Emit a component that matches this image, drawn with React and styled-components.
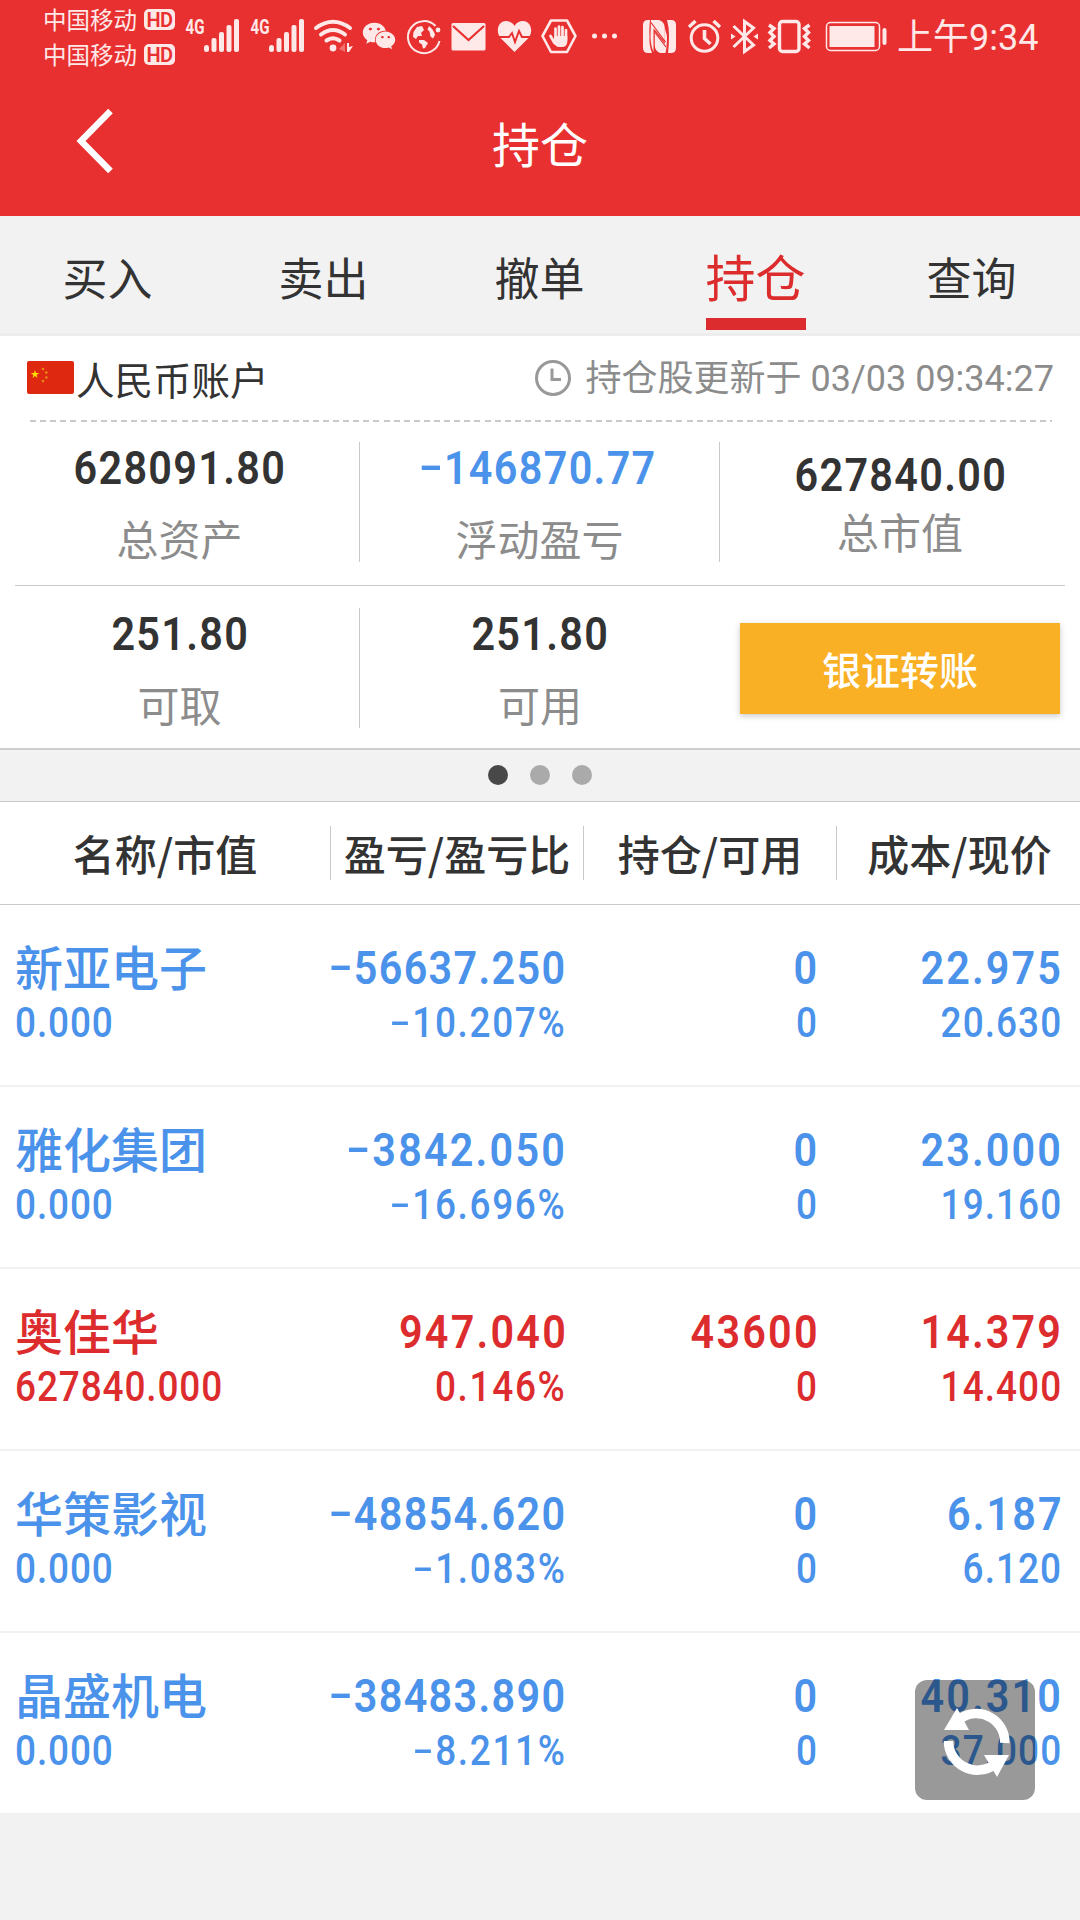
import React from 'react'
import styled, { createGlobalStyle } from 'styled-components'
import { FaWeixin } from 'react-icons/fa6'

const COLORS = {
  HEADER: '#e83030',
  RED: '#dd2c2e',
  BLUE: '#4a92ea',
  TEXT: '#333333',
  MUTED: '#8c8c8c',
  LINE: '#c9c9c9',
  BG_GRAY: '#f2f2f2',
  STATUS: '#ffe8e8',
  ORANGE: '#f9b024'
}

const FONT = 'Roboto, "Noto Sans CJK SC", sans-serif'
const CJK = '"Noto Sans CJK SC", sans-serif'

const GlobalStyle = createGlobalStyle`
  body {
    margin: 0;
    background: ${COLORS.BG_GRAY};
    color: ${COLORS.TEXT};
    font-family: ${FONT};
  }
  * {
    box-sizing: border-box;
  }
`

const Page = styled.div`
  position: relative;
  width: 1080px;
  height: 1920px;
  overflow: hidden;
  background: ${COLORS.BG_GRAY};
`

const Header = styled.header`
  height: 216px;
  background: ${COLORS.HEADER};
`

const StatusBar = styled.div`
  display: flex;
  height: 72px;
  padding-left: 43px;
  color: ${COLORS.STATUS};
`

const Carriers = styled.div`
  display: flex;
  flex-direction: column;
  padding-top: 2px;
  width: 143px;
`

const Carrier = styled.div`
  display: flex;
  align-items: center;
  gap: 7px;
  height: 35px;
  font-family: ${CJK};
  font-size: 23.5px;
  line-height: 35px;
  white-space: nowrap;
`

const HdBadge = styled.span`
  width: 31px;
  height: 21px;
  border-radius: 5px;
  background: ${COLORS.STATUS};
  color: ${COLORS.HEADER};
  font-family: Roboto, sans-serif;
  font-size: 20px;
  font-weight: 600;
  letter-spacing: -0.5px;
  line-height: 22px;
  text-align: center;
`

const Glyph = styled.svg`
  flex: none;
  display: block;
  height: 72px;
  width: ${props => props.$w}px;
  margin-left: ${props => props.$gap || 0}px;
  overflow: visible;
  fill: ${COLORS.STATUS};
`

const WeixinIcon = styled(FaWeixin)`
  flex: none;
  width: 34px;
  height: 32px;
  margin: 20px 0 0 9px;
`

const Time = styled.div`
  margin-left: 10px;
  padding-top: 2px;
  font-size: 36px;
  line-height: 72px;
  white-space: nowrap;
`

const TitleBar = styled.div`
  display: grid;
  grid-template-columns: 160px 1fr 160px;
  align-items: center;
  height: 144px;
`

const BackIcon = styled.svg`
  width: 42px;
  height: 70px;
  margin: 0 0 8px 74px;
`

const Title = styled.h1`
  margin: 0;
  color: #fff;
  font-family: ${CJK};
  font-size: 48px;
  font-weight: 400;
  line-height: 140px;
  height: 144px;
  text-align: center;
`

const Tabs = styled.nav`
  display: grid;
  grid-template-columns: repeat(5, 1fr);
  height: 120px;
  border-bottom: 3px solid #ededed;
`

const Tab = styled.div`
  display: flex;
  flex-direction: column;
  align-items: center;
  font-family: ${CJK};
  font-size: ${props => (props.$active ? 50 : 45)}px;
  padding-right: 1px;
  color: ${props => (props.$active ? COLORS.RED : COLORS.TEXT)};

  &::after {
    content: '';
    display: ${props => (props.$active ? 'block' : 'none')};
    width: 100px;
    height: 12px;
    background: ${COLORS.RED};
  }
`

const TabText = styled.span`
  height: 102px;
  line-height: ${props => (props.$active ? 118 : 122)}px;
`

const Account = styled.section`
  background: #fff;
`

const AccountBar = styled.div`
  display: flex;
  align-items: center;
  height: 84px;
  padding: 0 27px;
`

const Flag = styled.svg`
  width: 47px;
  height: 33px;
  margin: 0 2px 2px 0;
`

const AccountName = styled.div`
  flex: 1;
  font-family: ${CJK};
  font-size: 38.5px;
  line-height: 84px;
`

const ClockIcon = styled.svg`
  width: 38px;
  height: 38px;
  margin-right: 14px;
`

const Updated = styled.div`
  padding-top: 3px;
  margin-right: -1px;
  color: ${COLORS.MUTED};
  font-size: 36px;
  line-height: 81px;
  white-space: nowrap;
`

const DashedLine = styled.div`
  height: 2px;
  margin: 0 28px 0 30px;
  background: repeating-linear-gradient(90deg, ${COLORS.LINE} 0 6px, transparent 6px 10.1px);
`

const Metrics = styled.div`
  display: grid;
  grid-template-columns: repeat(3, 1fr);
  height: ${props => props.$height}px;
  padding: ${props => props.$top}px 0 0;
`

const Metric = styled.div`
  display: flex;
  flex-direction: column;
  align-items: center;
  height: 120px;
  padding-top: ${props => (props.$tight ? 8 : 1)}px;
  border-right: ${props => (props.$last ? 'none' : `1px solid ${COLORS.LINE}`)};
  color: ${props => props.$color || COLORS.TEXT};
`

const MetricLabel = styled.div`
  margin-top: ${props => (props.$tight ? 6 : 20)}px;
  color: ${COLORS.MUTED};
  font-family: ${CJK};
  font-size: 42px;
  line-height: 50px;
`

const Divider = styled.div`
  height: 1px;
  margin: 0 15px;
  background: ${COLORS.LINE};
`

const TransferButton = styled.button`
  width: 320px;
  height: 91px;
  margin: 15px 0 0 20px;
  padding: 0 0 2px;
  border: 0;
  background: ${COLORS.ORANGE};
  box-shadow: 0 2px 6px rgba(0, 0, 0, 0.22);
  color: #fff;
  font-family: ${CJK};
  font-size: 39px;
  font-weight: 500;
`

const Pager = styled.div`
  display: flex;
  justify-content: center;
  align-items: center;
  gap: 22px;
  height: 54px;
  padding: 0 1px 2px 0;
  border-top: 2px solid #cecece;
  border-bottom: 1px solid ${COLORS.LINE};
`

const Dot = styled.span`
  width: 20px;
  height: 20px;
  border-radius: 50%;
  background: ${props => (props.$active ? '#484848' : '#aaaaaa')};
`

const TableHead = styled.div`
  display: grid;
  grid-template-columns: 331px 253px 253px 245px;
  align-items: center;
  height: 103px;
  border-bottom: 1px solid ${COLORS.LINE};
  background: #fff;
`

const HeadCell = styled.div`
  height: 54px;
  border-right: ${props => (props.$last ? 'none' : `1px solid ${COLORS.LINE}`)};
  font-family: ${CJK};
  font-size: 42px;
  font-weight: 500;
  line-height: 54px;
  text-align: center;
  white-space: nowrap;
`

const Row = styled.div`
  display: grid;
  grid-template-columns: 280px 285px 252px 244px;
  height: 182px;
  padding-top: 32px;
  border-bottom: 2px solid #f1f1f1;
  background: #fff;
  color: ${props => (props.$up ? COLORS.RED : COLORS.BLUE)};
`

const Cell = styled.div`
  display: flex;
  flex-direction: column;
  align-items: ${props => (props.$left ? 'flex-start' : 'flex-end')};
  padding-left: ${props => (props.$left ? 15 : 0)}px;
`

const StockName = styled.div`
  height: 60px;
  font-family: ${CJK};
  font-size: 48px;
  font-weight: 500;
  line-height: 56px;
`

// digits are drawn slightly condensed, DIN style
const Digits = styled.div`
  height: 50px;
  margin-top: ${props => props.$offset || 0}px;
  margin-right: -${props => props.$spacing}px;
  font-family: Roboto, sans-serif;
  font-size: ${props => (props.$small ? 42 : 47)}px;
  font-weight: ${props => (props.$small ? 500 : 600)};
  letter-spacing: ${props => props.$spacing}px;
  line-height: 50px;
  white-space: nowrap;
  transform: scaleX(0.88);
  transform-origin: ${props => props.$origin || 'right'};
`

const Minus = styled.span`
  display: inline-block;
  margin-right: 4px;
  transform: translateY(-1px) scale(1.65, 0.9);
`

const RefreshButton = styled.button`
  position: absolute;
  left: 915px;
  top: 1680px;
  width: 120px;
  height: 120px;
  padding: 0;
  border: 0;
  border-radius: 12px;
  background: rgba(0, 0, 0, 0.4);
`

const tabs = ['买入', '卖出', '撤单', '持仓', '查询']

const columns = ['名称/市值', '盈亏/盈亏比', '持仓/可用', '成本/现价']

const positions = [
  { name: '新亚电子', value: '0.000', profit: '-56637.250', ratio: '-10.207%', held: '0', usable: '0', cost: '22.975', price: '20.630' },
  { name: '雅化集团', value: '0.000', profit: '-3842.050', ratio: '-16.696%', held: '0', usable: '0', cost: '23.000', price: '19.160' },
  { name: '奥佳华', value: '627840.000', profit: '947.040', ratio: '0.146%', held: '43600', usable: '0', cost: '14.379', price: '14.400', up: true },
  { name: '华策影视', value: '0.000', profit: '-48854.620', ratio: '-1.083%', held: '0', usable: '0', cost: '6.187', price: '6.120' },
  { name: '晶盛机电', value: '0.000', profit: '-38483.890', ratio: '-8.211%', held: '0', usable: '0', cost: '40.310', price: '37.000' }
]

const Num = ({ children, small, offset, origin, spacing = 1.5 }) => {
  const negative = children[0] === '-'
  return (
    <Digits $small={small} $offset={offset} $origin={origin} $spacing={spacing}>
      {negative && <Minus>-</Minus>}
      {negative ? children.slice(1) : children}
    </Digits>
  )
}

const Signal = ({ gap }) => (
  <Glyph $w={53} $gap={gap} viewBox="186 0 53 72">
    <text x="185.5" y="33.5" fontFamily="Roboto" fontSize="20.5" fontWeight="700" textLength="19" lengthAdjust="spacingAndGlyphs">4G</text>
    <rect x="204" y="45" width="5" height="7" rx="2.5" />
    <rect x="211.5" y="38" width="5" height="14" rx="2" />
    <rect x="219" y="32" width="5" height="20" rx="2" />
    <rect x="226.5" y="25" width="5" height="27" rx="2" />
    <rect x="234" y="19" width="5" height="33" rx="2" />
  </Glyph>
)

const StatusIcons = () => (
  <>
    <Signal />
    <Signal gap={12} />
    <Glyph $w={39} $gap={10} viewBox="314 0 39 72">
      <g fill="none" stroke={COLORS.STATUS} strokeWidth="4" strokeLinecap="round">
        <path d="M316 28 Q333 15.500 350 28" />
        <path d="M321 34.500 Q333 25.500 345 34.500" />
        <path d="M326.500 40.500 Q333 36 339.500 40.500" />
      </g>
      <circle cx="333" cy="48" r="3.400" />
      <path d="M339 49 l6 -6 v9 z" opacity=".35" />
      <path d="M347 43 v9 l2 0 l4 -6 l-4 1 v-4 z" />
    </Glyph>
    <WeixinIcon />
    <Glyph $w={35} $gap={10} viewBox="407 0 35 72">
      <path d="M436.500 26 A16 16 0 1 0 440.500 41" fill="none" stroke={COLORS.STATUS} strokeWidth="2" />
      <circle cx="439" cy="30" r="2.400" />
      <path d="M423 26 l-5 1 l-3.500 5 l-.5 5 l3 2 l2 -3 l4 0 l-1 -3 l3 -3 l-1 -2 z" />
      <path d="M420 40 l5 0 l4 3 l-3 5 l-2 .5 l-1 -4 l-3 -2 z" />
      <path d="M430 26 q5 4 6 9 l-2 3.500 l-2.500 -2 l-1 -5 l-2 -2 z" />
    </Glyph>
    <Glyph $w={34} $gap={10} viewBox="452 0 34 72">
      <rect x="452.500" y="23" width="34" height="27.500" rx="1.500" />
      <path d="M454 26 L469.500 40 L485 26" fill="none" stroke={COLORS.HEADER} strokeWidth="2.200" />
    </Glyph>
    <Glyph $w={35} $gap={12} viewBox="497 0 35 72">
      <path d="M514.500 52 L501 38.500 C495 32 498 21 506 21 C510 21 513 23 514.500 26 C516 23 519 21 523 21 C531 21 534 32 528 38.500 Z" />
      <path d="M497 37 H509 L512 33 L515 42 L519 31 L522 37 H533" fill="none" stroke={COLORS.HEADER} strokeWidth="1.900" />
    </Glyph>
    <Glyph $w={36} $gap={9} viewBox="541 0 36 72">
      <path d="M551 20.500 H567 L575.500 36 L567 52 H551 L542.500 36 Z" fill="none" stroke={COLORS.STATUS} strokeWidth="2.600" strokeLinejoin="round" />
      <g stroke={COLORS.STATUS} strokeWidth="2.700" strokeLinecap="round">
        <path d="M555.500 38 V28.500 M559 38 V26.500 M562.500 38 V27 M566 40 V30 M550.500 36 L554.500 43" />
      </g>
      <path d="M554 36 H567.300 V42 Q567 47 562 47 H558 Q555 46 552 40 L554 41 Z" />
    </Glyph>
    <Glyph $w={25} $gap={15} viewBox="592 0 25 72">
      <circle cx="594.500" cy="36" r="2.500" />
      <circle cx="604.500" cy="36" r="2.500" />
      <circle cx="614.500" cy="36" r="2.500" />
    </Glyph>
    <Glyph $w={33} $gap={26} viewBox="643 0 33 72">
      <path d="M648 20 H650 Q649 30 649.500 36 Q649 46 652 53 H648 Q643 53 643 48 V25 Q643 20 648 20 Z" />
      <path d="M651 20 H659 Q664.800 22 664.800 28 V42 L656 31 L653.500 28.500 V52 Q650.500 45 650.500 36 Z" />
      <path d="M654.800 31.500 L664.800 44 V28 L667 36 Q667 47 665.500 53 H660 Q654.800 51 654.800 45 Z" />
      <path d="M667 20 H671 Q676 20 676 25 V48 Q676 53 671 53 H668 Q669 45 669 36 Q669 27 667 20 Z" />
      <path d="M651 22.500 L665.500 42 M654.200 31.500 L666 47" fill="none" stroke={COLORS.HEADER} strokeWidth="1.200" />
    </Glyph>
    <Glyph $w={33} $gap={12} viewBox="688 0 33 72">
      <g fill="none" stroke={COLORS.STATUS} strokeWidth="3">
        <circle cx="704.500" cy="38" r="13.300" />
        <path d="M704.500 30 V38.500 L710.500 44" strokeWidth="3.600" />
        <path d="M689 27 L695.500 21 M720 27 L713.500 21" strokeWidth="3.500" />
      </g>
    </Glyph>
    <Glyph $w={27} $gap={10} viewBox="731 0 27 72">
      <path d="M733.500 26 L753.500 45 L744.500 51.500 V21.500 L753.500 28 L733.500 47" fill="none" stroke={COLORS.STATUS} strokeWidth="3" />
      <path d="M731 33.500 l4.500 3 l-4.500 3 z M758 33.500 l-4.500 3 l4.500 3 z" />
    </Glyph>
    <Glyph $w={42} $gap={10} viewBox="768 0 42 72">
      <g fill="none" stroke={COLORS.STATUS} strokeWidth="3.400">
        <rect x="779.500" y="21.500" width="19.500" height="30" rx="3" />
        <path d="M769 25 L774 28.500 L770 32.500 L774 36.500 L770 40.500 L774 44 L769 48 M809.500 25 L804.500 28.500 L808.500 32.500 L804.500 36.500 L808.500 40.500 L804.500 44 L809.500 48" />
      </g>
    </Glyph>
    <Glyph $w={62} $gap={15} viewBox="825 0 62 72">
      <rect x="826.500" y="22.500" width="53" height="28" rx="4" fill="none" stroke={COLORS.STATUS} strokeWidth="1.500" />
      <rect x="829.500" y="26" width="45" height="21" />
      <rect x="882.500" y="28" width="4" height="17" rx="2" />
    </Glyph>
  </>
)

const AccountSummary = () => (
  <Account>
    <AccountBar>
      <Flag viewBox="0 0 47 33">
        <rect width="47" height="33" rx="2" fill="#de2910" />
        <path d="M8 9 l1 3 h3.200 l-2.600 2 l1 3 l-2.600 -1.900 l-2.600 1.900 l1 -3 l-2.600 -2 h3.200 z" fill="#ffde00" />
        <g fill="#e98d12">
          <circle cx="16" cy="8" r="1.300" />
          <circle cx="19.300" cy="11.500" r="1.300" />
          <circle cx="19.300" cy="16.500" r="1.300" />
          <circle cx="16" cy="20" r="1.300" />
        </g>
      </Flag>
      <AccountName>人民币账户</AccountName>
      <ClockIcon viewBox="0 0 38 38" fill="none" stroke="#999" strokeWidth="3">
        <circle cx="19" cy="19" r="16.500" />
        <path d="M18 9.500 V20.500 H27" />
      </ClockIcon>
      <Updated>持仓股更新于 03/03 09:34:27</Updated>
    </AccountBar>
    <DashedLine />
    <Metrics $height={163} $top={20}>
      <Metric>
        <Num origin="center">628091.80</Num>
        <MetricLabel>总资产</MetricLabel>
      </Metric>
      <Metric $color={COLORS.BLUE}>
        <Num origin="center">-146870.77</Num>
        <MetricLabel>浮动盈亏</MetricLabel>
      </Metric>
      <Metric $tight $last>
        <Num origin="center">627840.00</Num>
        <MetricLabel $tight>总市值</MetricLabel>
      </Metric>
    </Metrics>
    <Divider />
    <Metrics $height={162} $top={22}>
      <Metric>
        <Num origin="center">251.80</Num>
        <MetricLabel>可取</MetricLabel>
      </Metric>
      <Metric $last>
        <Num origin="center">251.80</Num>
        <MetricLabel>可用</MetricLabel>
      </Metric>
      <TransferButton>银证转账</TransferButton>
    </Metrics>
  </Account>
)

const Position = ({ item }) => (
  <Row $up={item.up}>
    <Cell $left>
      <StockName>{item.name}</StockName>
      <Num small offset={1} origin="left" spacing={1}>{item.value}</Num>
    </Cell>
    <Cell>
      <Num offset={6} spacing={item.profit.length > 9 ? 1.5 : 2.5}>{item.profit}</Num>
      <Num small offset={5} spacing={1.9}>{item.ratio}</Num>
    </Cell>
    <Cell>
      <Num offset={6} spacing={2.5}>{item.held}</Num>
      <Num small offset={5} spacing={1}>{item.usable}</Num>
    </Cell>
    <Cell>
      <Num offset={6} spacing={2.4}>{item.cost}</Num>
      <Num small offset={5} spacing={1.2}>{item.price}</Num>
    </Cell>
  </Row>
)

const App = () => (
  <>
    <GlobalStyle />
    <Page>
      <Header>
        <StatusBar>
          <Carriers>
            <Carrier>中国移动<HdBadge>HD</HdBadge></Carrier>
            <Carrier>中国移动<HdBadge>HD</HdBadge></Carrier>
          </Carriers>
          <StatusIcons />
          <Time>上午9:34</Time>
        </StatusBar>
        <TitleBar>
          <BackIcon viewBox="0 0 42 70" fill="none" stroke="#fff" strokeWidth="6.500">
            <path d="M36.500 6 L7 36 L36.500 66" />
          </BackIcon>
          <Title>持仓</Title>
        </TitleBar>
      </Header>
      <Tabs>
        {tabs.map(tab => (
          <Tab key={tab} $active={tab === '持仓'}>
            <TabText $active={tab === '持仓'}>{tab}</TabText>
          </Tab>
        ))}
      </Tabs>
      <AccountSummary />
      <Pager>
        <Dot $active />
        <Dot />
        <Dot />
      </Pager>
      <TableHead>
        {columns.map((column, index) => (
          <HeadCell key={column} $last={index === columns.length - 1}>{column}</HeadCell>
        ))}
      </TableHead>
      {positions.map(item => (
        <Position key={item.name} item={item} />
      ))}
      <RefreshButton aria-label="刷新">
        <svg width="120" height="120" viewBox="0 0 120 120">
          <g fill="none" stroke="#fff" strokeWidth="9.500">
            <path d="M46 38 A28.500 28.500 0 0 1 89.800 63" />
            <path d="M33.500 61 A29 29 0 0 0 79 85" />
          </g>
          <path d="M29 50 L42 28 L54 50 Z M94 75 L82 97 L69 75 Z" fill="#fff" />
        </svg>
      </RefreshButton>
    </Page>
  </>
)

export default App
